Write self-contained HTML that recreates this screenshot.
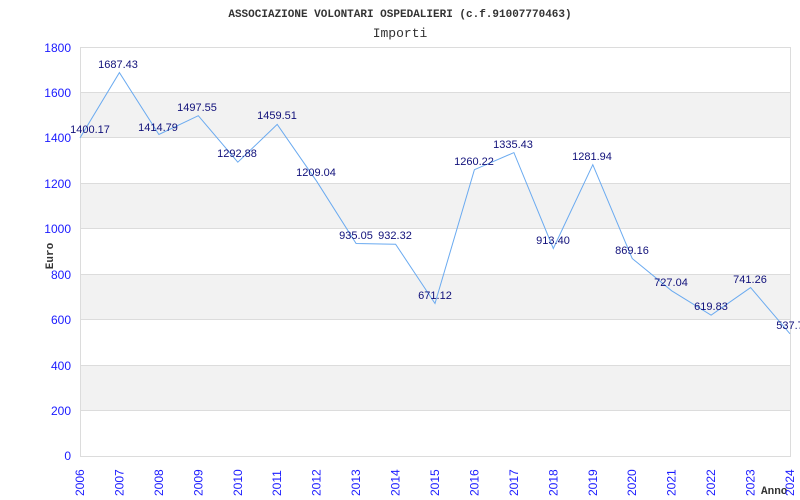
<!DOCTYPE html><html><head><style>body{margin:0;background:#fff}svg{display:block}</style></head><body>
<svg width="800" height="500" xmlns="http://www.w3.org/2000/svg">
<rect width="800" height="500" fill="#fff"/>
<g fill="#f2f2f2">
<rect x="80" y="92.4" width="710" height="45.4"/>
<rect x="80" y="183.3" width="710" height="45.4"/>
<rect x="80" y="274.2" width="710" height="45.4"/>
<rect x="80" y="365.1" width="710" height="45.4"/>
</g>
<g stroke="#dcdcdc" stroke-width="1">
<line x1="80" x2="790" y1="92.5" y2="92.5"/><line x1="80" x2="790" y1="137.5" y2="137.5"/>
<line x1="80" x2="790" y1="183.5" y2="183.5"/><line x1="80" x2="790" y1="228.5" y2="228.5"/>
<line x1="80" x2="790" y1="274.5" y2="274.5"/><line x1="80" x2="790" y1="319.5" y2="319.5"/>
<line x1="80" x2="790" y1="365.5" y2="365.5"/><line x1="80" x2="790" y1="410.5" y2="410.5"/>
<rect x="80.5" y="47.5" width="710" height="409" fill="none"/>
</g>
<text x="400" y="17" text-anchor="middle" font-family="Liberation Mono, monospace" font-weight="bold" font-size="11" fill="#333">ASSOCIAZIONE VOLONTARI OSPEDALIERI (c.f.91007770463)</text>
<text x="400" y="37" text-anchor="middle" font-family="Liberation Mono, monospace" font-size="13" fill="#333">Importi</text>
<g font-family="Liberation Sans, sans-serif" font-size="12" fill="#1a1aff" text-anchor="end">
<text x="71" y="52">1800</text><text x="71" y="97">1600</text><text x="71" y="142">1400</text>
<text x="71" y="188">1200</text><text x="71" y="233">1000</text><text x="71" y="279">800</text>
<text x="71" y="324">600</text><text x="71" y="370">400</text><text x="71" y="415">200</text><text x="71" y="460">0</text>
</g>
<text transform="translate(53,256) rotate(-90)" text-anchor="middle" font-family="Liberation Mono, monospace" font-weight="bold" font-size="11" fill="#333">Euro</text>
<text x="761" y="494" font-family="Liberation Mono, monospace" font-weight="bold" font-size="11" fill="#333">Anno</text>
<g font-family="Liberation Sans, sans-serif" font-size="12" fill="#1a1aff">
<text transform="translate(84,496) rotate(-90)">2006</text>
<text transform="translate(123.4,496) rotate(-90)">2007</text>
<text transform="translate(162.9,496) rotate(-90)">2008</text>
<text transform="translate(202.3,496) rotate(-90)">2009</text>
<text transform="translate(241.8,496) rotate(-90)">2010</text>
<text transform="translate(281.2,496) rotate(-90)">2011</text>
<text transform="translate(320.7,496) rotate(-90)">2012</text>
<text transform="translate(360.1,496) rotate(-90)">2013</text>
<text transform="translate(399.6,496) rotate(-90)">2014</text>
<text transform="translate(439,496) rotate(-90)">2015</text>
<text transform="translate(478.4,496) rotate(-90)">2016</text>
<text transform="translate(517.9,496) rotate(-90)">2017</text>
<text transform="translate(557.3,496) rotate(-90)">2018</text>
<text transform="translate(596.8,496) rotate(-90)">2019</text>
<text transform="translate(636.2,496) rotate(-90)">2020</text>
<text transform="translate(675.7,496) rotate(-90)">2021</text>
<text transform="translate(715.1,496) rotate(-90)">2022</text>
<text transform="translate(754.6,496) rotate(-90)">2023</text>
<text transform="translate(794,496) rotate(-90)">2024</text>
</g>
<polyline fill="none" stroke="#6aaaf0" stroke-width="1" points="80,137.9 119.4,72.6 158.9,134.5 198.3,115.7 237.8,162.2 277.2,124.4 316.7,181.3 356.1,243.5 395.6,244.2 435,303.5 474.4,169.7 513.9,152.6 553.3,248.5 592.8,164.7 632.2,258.5 671.7,290.8 711.1,315.2 750.6,287.6 790,333.8"/>
<g font-family="Liberation Sans, sans-serif" font-size="11" fill="#10107a" text-anchor="middle">
<text x="90" y="133">1400.17</text>
<text x="118" y="68">1687.43</text>
<text x="158" y="131">1414.79</text>
<text x="197" y="111">1497.55</text>
<text x="237" y="157">1292.88</text>
<text x="277" y="119">1459.51</text>
<text x="316" y="176">1209.04</text>
<text x="356" y="239">935.05</text>
<text x="395" y="239">932.32</text>
<text x="435" y="299">671.12</text>
<text x="474" y="165">1260.22</text>
<text x="513" y="148">1335.43</text>
<text x="553" y="244">913.40</text>
<text x="592" y="160">1281.94</text>
<text x="632" y="254">869.16</text>
<text x="671" y="286">727.04</text>
<text x="711" y="310">619.83</text>
<text x="750" y="283">741.26</text>
<text x="790" y="329">537.7</text>
</g>
</svg>
</body></html>
